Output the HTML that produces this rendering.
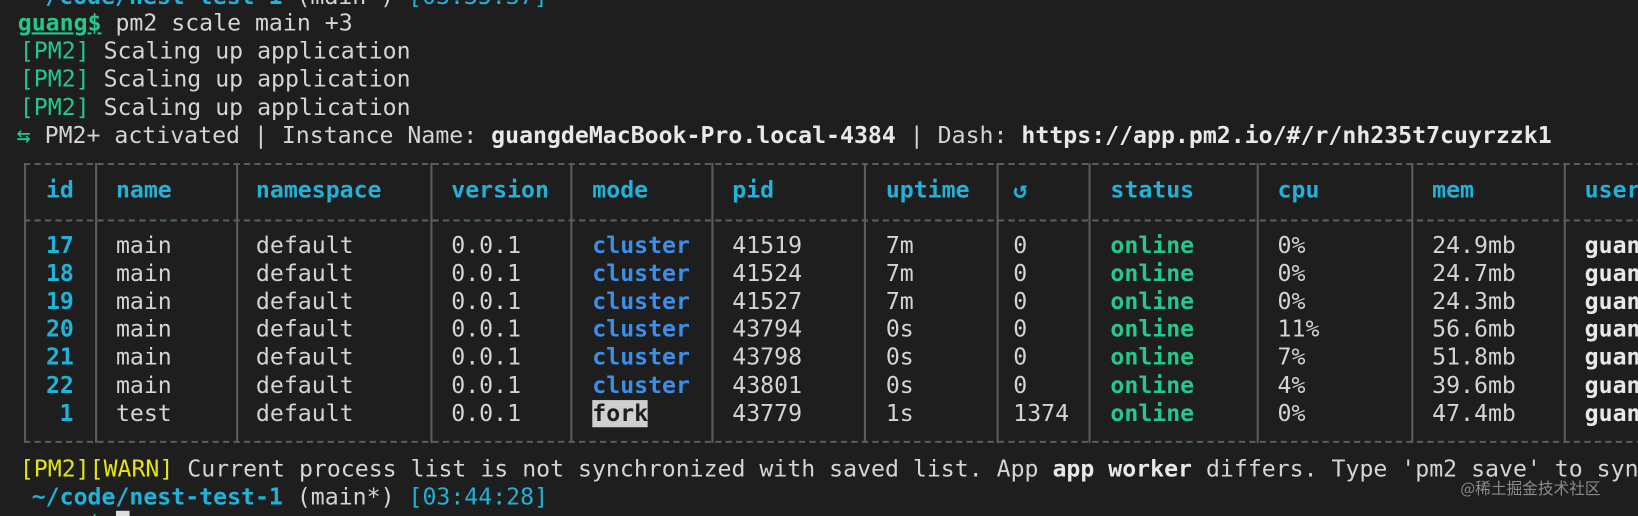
<!DOCTYPE html>
<html><head><meta charset="utf-8"><style>
html,body{margin:0;padding:0;background:#1e1e1e;width:1638px;height:516px;overflow:hidden;position:relative}
#w{position:absolute;left:0;top:0;width:1568px;height:494px;transform:scale(1.0446);transform-origin:0 0;overflow:hidden}
.l{position:absolute;white-space:pre;font-family:"DejaVu Sans Mono","Liberation Mono",monospace;font-size:22.2px;line-height:26px;height:26px;color:#d4d4d4}
b{font-weight:bold}
.g{color:#23c98b}.c{color:#20b2d8}.bl{color:#3b8eea}.y{color:#e5e510}.w{color:#e8e8e8}
.h{position:absolute;height:0;border-top:2px dashed #5c5c5c}
.v{position:absolute;width:2px;background:#5c5c5c}
.r span,.r b{position:absolute}
</style></head><body><div id="w"><div style="position:absolute;left:0;top:2px;width:1568px;height:494px">
<div class="l" style="left:30px;top:-18px"><b class="c">~/code/nest-test-1</b> (main*) <span class="c">[03:35:37]</span></div>
<div class="l" style="left:17px;top:7px"><b class="g" style="text-decoration:underline">guang$</b> pm2 scale main +3</div>
<div class="l" style="left:19px;top:34px"><span class="g">[PM2]</span> Scaling up application</div>
<div class="l" style="left:19px;top:61px"><span class="g">[PM2]</span> Scaling up application</div>
<div class="l" style="left:19px;top:88px"><span class="g">[PM2]</span> Scaling up application</div>
<div class="l" style="left:16px;top:115px"><span class="g">⇆</span> PM2+ activated | Instance Name: <b class="w">guangdeMacBook-Pro.local-4384</b> | Dash: <b class="w">https://app.pm2.io/#/r/nh235t7cuyrzzk1</b></div>
</div>
<div class="h" style="left:23px;top:156px;width:1620px"></div>
<div class="h" style="left:23px;top:210px;width:1620px"></div>
<div class="h" style="left:23px;top:422px;width:1620px"></div>
<div class="v" style="left:23px;top:156px;height:268px"></div>
<div class="v" style="left:91px;top:156px;height:268px"></div>
<div class="v" style="left:226px;top:156px;height:268px"></div>
<div class="v" style="left:412px;top:156px;height:268px"></div>
<div class="v" style="left:546px;top:156px;height:268px"></div>
<div class="v" style="left:681px;top:156px;height:268px"></div>
<div class="v" style="left:827px;top:156px;height:268px"></div>
<div class="v" style="left:954px;top:156px;height:268px"></div>
<div class="v" style="left:1042px;top:156px;height:268px"></div>
<div class="v" style="left:1203px;top:156px;height:268px"></div>
<div class="v" style="left:1351px;top:156px;height:268px"></div>
<div class="v" style="left:1497px;top:156px;height:268px"></div>

<div class="l c r" style="top:169px;left:0;font-weight:bold"><span style="left:44px">id</span><span style="left:111px">name</span><span style="left:245px">namespace</span><span style="left:432px">version</span><span style="left:567px">mode</span><span style="left:701px">pid</span><span style="left:848px">uptime</span><span style="left:970px">↺</span><span style="left:1063px">status</span><span style="left:1223px">cpu</span><span style="left:1371px">mem</span><span style="left:1517px">user</span></div>

<div class="l r" style="top:222px;left:0"><b class="c" style="left:44px">17</b><span style="left:111px">main</span><span style="left:245px">default</span><span style="left:432px">0.0.1</span><b class="bl" style="left:567px">cluster</b><span style="left:701px">41519</span><span style="left:848px">7m</span><span style="left:970px">0</span><b class="g" style="left:1063px">online</b><span style="left:1223px">0%</span><span style="left:1371px">24.9mb</span><b class="w" style="left:1517px">guang</b></div>
<div class="l r" style="top:249px;left:0"><b class="c" style="left:44px">18</b><span style="left:111px">main</span><span style="left:245px">default</span><span style="left:432px">0.0.1</span><b class="bl" style="left:567px">cluster</b><span style="left:701px">41524</span><span style="left:848px">7m</span><span style="left:970px">0</span><b class="g" style="left:1063px">online</b><span style="left:1223px">0%</span><span style="left:1371px">24.7mb</span><b class="w" style="left:1517px">guang</b></div>
<div class="l r" style="top:276px;left:0"><b class="c" style="left:44px">19</b><span style="left:111px">main</span><span style="left:245px">default</span><span style="left:432px">0.0.1</span><b class="bl" style="left:567px">cluster</b><span style="left:701px">41527</span><span style="left:848px">7m</span><span style="left:970px">0</span><b class="g" style="left:1063px">online</b><span style="left:1223px">0%</span><span style="left:1371px">24.3mb</span><b class="w" style="left:1517px">guang</b></div>
<div class="l r" style="top:302px;left:0"><b class="c" style="left:44px">20</b><span style="left:111px">main</span><span style="left:245px">default</span><span style="left:432px">0.0.1</span><b class="bl" style="left:567px">cluster</b><span style="left:701px">43794</span><span style="left:848px">0s</span><span style="left:970px">0</span><b class="g" style="left:1063px">online</b><span style="left:1223px">11%</span><span style="left:1371px">56.6mb</span><b class="w" style="left:1517px">guang</b></div>
<div class="l r" style="top:329px;left:0"><b class="c" style="left:44px">21</b><span style="left:111px">main</span><span style="left:245px">default</span><span style="left:432px">0.0.1</span><b class="bl" style="left:567px">cluster</b><span style="left:701px">43798</span><span style="left:848px">0s</span><span style="left:970px">0</span><b class="g" style="left:1063px">online</b><span style="left:1223px">7%</span><span style="left:1371px">51.8mb</span><b class="w" style="left:1517px">guang</b></div>
<div class="l r" style="top:356px;left:0"><b class="c" style="left:44px">22</b><span style="left:111px">main</span><span style="left:245px">default</span><span style="left:432px">0.0.1</span><b class="bl" style="left:567px">cluster</b><span style="left:701px">43801</span><span style="left:848px">0s</span><span style="left:970px">0</span><b class="g" style="left:1063px">online</b><span style="left:1223px">4%</span><span style="left:1371px">39.6mb</span><b class="w" style="left:1517px">guang</b></div>
<div class="l r" style="top:383px;left:0"><b class="c" style="left:57px">1</b><span style="left:111px">test</span><span style="left:245px">default</span><span style="left:432px">0.0.1</span><b style="left:567px;background:#cfcfcf;color:#1e1e1e">fork</b><span style="left:701px">43779</span><span style="left:848px">1s</span><span style="left:970px">1374</span><b class="g" style="left:1063px">online</b><span style="left:1223px">0%</span><span style="left:1371px">47.4mb</span><b class="w" style="left:1517px">guang</b></div>

<div class="l" style="left:19px;top:436px"><span class="y">[PM2][WARN]</span> Current process list is not synchronized with saved list. App <b class="w">app worker</b> differs. Type 'pm2 save' to synchronize.</div>
<div class="l" style="left:17px;top:463px"> <b class="c">~/code/nest-test-1</b> (main*) <span class="c">[03:44:28]</span></div>
<div class="l" style="left:17px;top:489px"><b class="g">guang$</b> <span style="background:#ddd">&nbsp;</span></div>
<div style="position:absolute;left:1398px;top:457px;font-family:'Noto Sans CJK SC',sans-serif;font-size:15px;color:#8a8a8a">@稀土掘金技术社区</div>
</div></body></html>
